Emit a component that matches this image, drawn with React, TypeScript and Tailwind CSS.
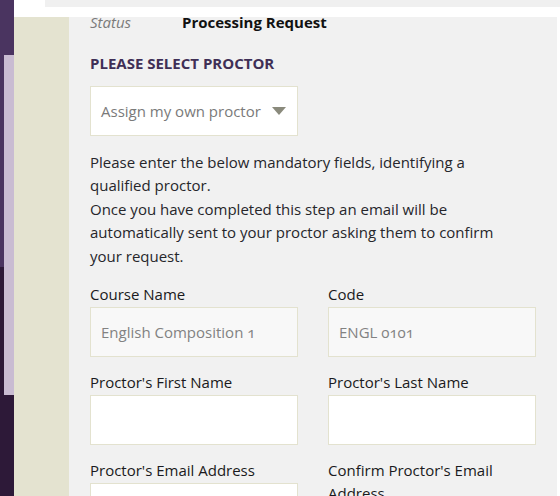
import React from "react";

const Field = ({ label, value, disabled }: { label: string; value?: string; disabled?: boolean }) => (
  <div className="flex flex-col w-[208px]">
    <div className="h-[23px] mb-[1px] text-[15px] leading-[23px] text-[#1a1a20] whitespace-nowrap">{label}</div>
    <div
      className={`h-[50px] border border-[#e3e2cf] flex items-center px-[10px] text-[15px] text-[#828282] oldstyle-nums ${
        disabled ? "bg-[#f8f8f8]" : "bg-white"
      }`}
    >
      {value}
    </div>
  </div>
);

export default function App() {
  return (
    <div
      className="w-[560px] h-[496px] overflow-hidden flex bg-white"
      style={{ fontFamily: "'Open Sans', 'Noto Sans', sans-serif" }}
    >
      {/* left purple strip */}
      <div className="w-[14px] h-full flex shrink-0">
        <div className="w-[4px] flex flex-col">
          <div className="h-[267px] bg-[#4a3460]" />
          <div className="flex-1 bg-[#2d1938]" />
        </div>
        <div className="w-[10px] flex flex-col">
          <div className="h-[55px] bg-[#4a3460]" />
          <div className="h-[340px] bg-[#c9bcd2]" />
          <div className="flex-1 bg-[#2d1938]" />
        </div>
      </div>

      {/* main */}
      <div className="flex-1 flex flex-col">
        <div className="h-[17px] flex shrink-0">
          <div className="w-[31px] bg-white" />
          <div className="flex-1 flex flex-col">
            <div className="h-[7px] bg-[#f0f0f0]" />
            <div className="flex-1 bg-white" />
          </div>
        </div>
        <div className="flex-1 flex min-h-0">
          <div className="w-[55px] bg-[#e4e3d0]" />
          <div className="w-[488px] bg-[#f1f1f1] overflow-hidden pl-[21px] pr-[21px]">
            <div className="-mt-[6px] flex h-[23px] leading-[23px] text-[15px]">
              <span className="w-[92px] italic text-[#7b7b7b]">Status</span>
              <span className="font-bold text-[#111]">Processing Request</span>
            </div>
            <div className="mt-[18px] h-[23px] leading-[23px] text-[15px] font-bold text-[#3f2f56]">
              PLEASE SELECT PROCTOR
            </div>
            <div className="mt-[11px] w-[208px] h-[50px] bg-white border border-[#e3e2cf] flex items-center justify-between pl-[10px] pr-[11px]">
              <span className="text-[15px] text-[#7a7a7a] whitespace-nowrap">Assign my own proctor</span>
              <svg width="14" height="9" viewBox="0 0 14 9">
                <polygon points="0,0 14,0 7,8" fill="#8a8a7c" />
              </svg>
            </div>
            <p className="mt-[15px] w-[420px] text-[15px] leading-[23.4px] text-[#26262b]">
              Please enter the below mandatory fields, identifying a qualified proctor.
              <br />
              Once you have completed this step an email will be automatically sent to your proctor asking them to
              confirm your request.
            </p>
            <div className="mt-[15px] flex flex-col gap-[14px]">
              <div className="flex gap-[30px]">
                <Field label="Course Name" value="English Composition 1" disabled />
                <Field label="Code" value="ENGL 0101" disabled />
              </div>
              <div className="flex gap-[30px]">
                <Field label="Proctor's First Name" />
                <Field label="Proctor's Last Name" />
              </div>
              <div className="flex gap-[30px]">
                <Field label="Proctor's Email Address" />
                <div className="flex flex-col w-[208px]">
                  <div className="text-[15px] leading-[23px] text-[#1a1a20]">Confirm Proctor's Email Address</div>
                </div>
              </div>
            </div>
          </div>
          <div className="w-[3px] bg-white" />
        </div>
      </div>
    </div>
  );
}
